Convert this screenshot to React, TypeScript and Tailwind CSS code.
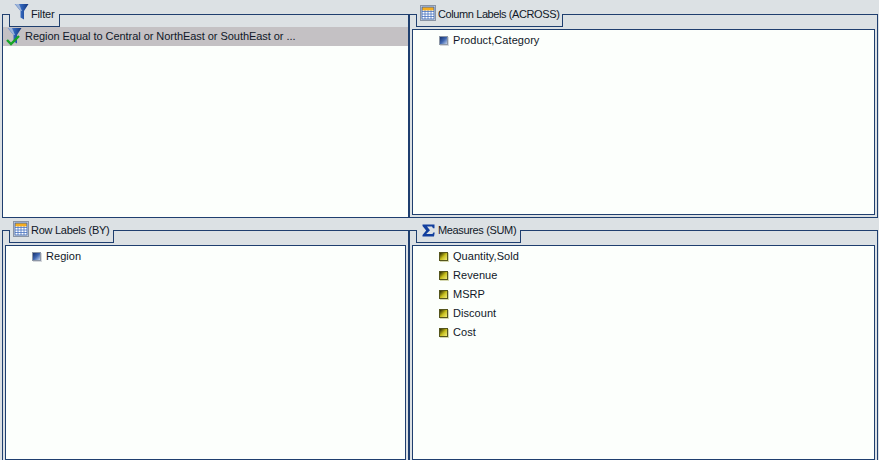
const Funnel = ({ className = "", id }: { className?: string; id: string }) => (
  <svg viewBox="0 0 15 17" width="15" height="17" className={className}>
    <defs>
      <linearGradient id={id} x1="0" x2="1" y1="0" y2="0">
        <stop offset="0" stopColor="#7f9ccf" />
        <stop offset="0.5" stopColor="#2f62b8" />
        <stop offset="1" stopColor="#12357c" />
      </linearGradient>
    </defs>
    <path d="M0.5 1 L14.5 1 L10 8 L10 16.5 L6.5 14.5 L6.5 8 Z" fill={`url(#${id})`} />
    <path d="M1.5 1 L5 1 L8 8 L6.5 8 Z" fill="#a7bbdc" opacity="0.9" />
  </svg>
);

const TableIcon = () => (
  <svg viewBox="0 0 16 16" width="16" height="16" className="-mt-[2px] block">
    <rect x="0.5" y="0.5" width="15" height="15" fill="#d5dae0" stroke="#8a94a4" />
    <rect x="2" y="2" width="12" height="12" fill="#fff" />
    <path d="M2 6.5H14M2 9H14M2 11.5H14M5 5V14M8 5V14M11 5V14" stroke="#4a74c2" strokeWidth="0.8" />
    <rect x="2" y="2" width="12" height="3.4" fill="#f5ad1f" />
    <rect x="2" y="2" width="12" height="12" fill="none" stroke="#2f5cb0" strokeWidth="0.8" />
  </svg>
);

const Sigma = () => (
  <svg viewBox="0 0 13 13" width="13" height="13" className="block">
    <path d="M0.5 0.5H12.5V4.2H11L10 2.5H5L8 6.2L4.2 10H10.5L11.3 8.5H12.7L12 12.5H0.5V11L4.2 6.5L0.5 2Z" fill="#123f9e" />
  </svg>
);

const Bullet = ({ kind }: { kind: "blue" | "yellow" }) => (
  <span
    className={
      kind === "blue"
        ? "block h-[9px] w-[9px] border border-[#8d97a6] bg-gradient-to-br from-[#17326e] via-[#3f66b0] to-[#c4d2ea] shadow-[1px_1px_0_#d5d8dc]"
        : "block h-[9px] w-[9px] border border-[#55551c] bg-gradient-to-br from-[#2e2c04] via-[#c4bc18] to-[#f2ee70] shadow-[1px_1px_0_#d5d8b0]"
    }
  />
);

const Item = ({ text, kind }: { text: string; kind: "blue" | "yellow" }) => (
  <div className="flex h-[19px] items-center gap-[5px]">
    <Bullet kind={kind} />
    <span className="tracking-[0.05px]">{text}</span>
  </div>
);

function Panel({
  label,
  icon,
  tabW,
  tracking,
  className,
  children,
}: {
  label: string;
  icon: React.ReactNode;
  tabW: string;
  tracking: string;
  className: string;
  children: React.ReactNode;
}) {
  return (
    <div className={`flex flex-col ${className}`}>
      <div className="flex h-[13px] shrink-0">
        <div className="w-[7px] shrink-0 border-l border-t border-[#1f3f6f]" />
        <div className={`${tabW} h-[13px] shrink-0 border-x border-b border-[#1f3f6f]`}>
          <div className="-mt-[9px] flex h-[18px] items-center">
            <div className="flex w-[21px] shrink-0 justify-center pl-[1px]">{icon}</div>
            <span className={`whitespace-nowrap ${tracking}`}>{label}</span>
          </div>
        </div>
        <div className="grow border-r border-t border-[#1f3f6f]" />
      </div>
      {children}
    </div>
  );
}

export default function App() {
  return (
    <div
      className="h-[462px] w-[881px] overflow-hidden bg-white text-[11px] leading-none text-[#101828]"
      style={{ fontFamily: '"Liberation Sans", Arial, sans-serif' }}
    >
      <div className="flex h-[460px] w-[879px] flex-col gap-[12px] bg-[#dce1e4] pl-[2px] pr-[1px] pt-[14px]">
        <div className="flex h-[204px]">
          <Panel
            label="Filter"
            icon={<Funnel id="f1" className="-mt-[5px] block" />}
            tabW="w-[51px]"
            tracking="-tracking-[0.15px]"
            className="w-[407px]"
          >
            <div className="grow border-x border-b border-[#1f3f6f] bg-[#fcfffc]">
              <div className="flex h-[19px] items-center bg-[#c4c1c4]">
                <div className="relative flex h-[19px] w-[22px] shrink-0 items-center justify-start pl-[4px]">
                  <Funnel id="f2" className="-mt-[2px] block" />
                  <svg viewBox="0 0 14 12" width="14" height="12" className="absolute left-[3px] top-[7px]">
                    <path d="M1 6 L5 10 L13 2" fill="none" stroke="#17a526" strokeWidth="2.4" />
                  </svg>
                </div>
                <span className="whitespace-nowrap -tracking-[0.05px]">Region Equal to Central or NorthEast or SouthEast or ...</span>
              </div>
            </div>
          </Panel>
          <Panel
            label="Column Labels (ACROSS)"
            icon={<TableIcon />}
            tabW="w-[147px]"
            tracking="-tracking-[0.4px]"
            className="w-[469px]"
          >
            <div className="flex grow flex-col border-x border-b border-[#1f3f6f] p-[2px]">
              <div className="grow border border-[#1f3f6f] bg-[#fcfffc] pl-[26px] pt-[1px]">
                <Item text="Product,Category" kind="blue" />
              </div>
            </div>
          </Panel>
        </div>
        <div className="flex h-[230px]">
          <Panel
            label="Row Labels (BY)"
            icon={<TableIcon />}
            tabW="w-[105px]"
            tracking="-tracking-[0.27px]"
            className="w-[407px]"
          >
            <div className="flex grow flex-col border-x border-[#1f3f6f] px-[2px] pt-[2px]">
              <div className="grow border border-[#1f3f6f] bg-[#fcfffc] pl-[26px] pt-[1px]">
                <Item text="Region" kind="blue" />
              </div>
            </div>
          </Panel>
          <Panel
            label="Measures (SUM)"
            icon={<Sigma />}
            tabW="w-[105px]"
            tracking="-tracking-[0.35px]"
            className="w-[469px]"
          >
            <div className="flex grow flex-col border-x border-[#1f3f6f] px-[2px] pt-[2px]">
              <div className="grow border border-[#1f3f6f] bg-[#fcfffc] pl-[26px] pt-[1px]">
                <Item text="Quantity,Sold" kind="yellow" />
                <Item text="Revenue" kind="yellow" />
                <Item text="MSRP" kind="yellow" />
                <Item text="Discount" kind="yellow" />
                <Item text="Cost" kind="yellow" />
              </div>
            </div>
          </Panel>
        </div>
      </div>
    </div>
  );
}
